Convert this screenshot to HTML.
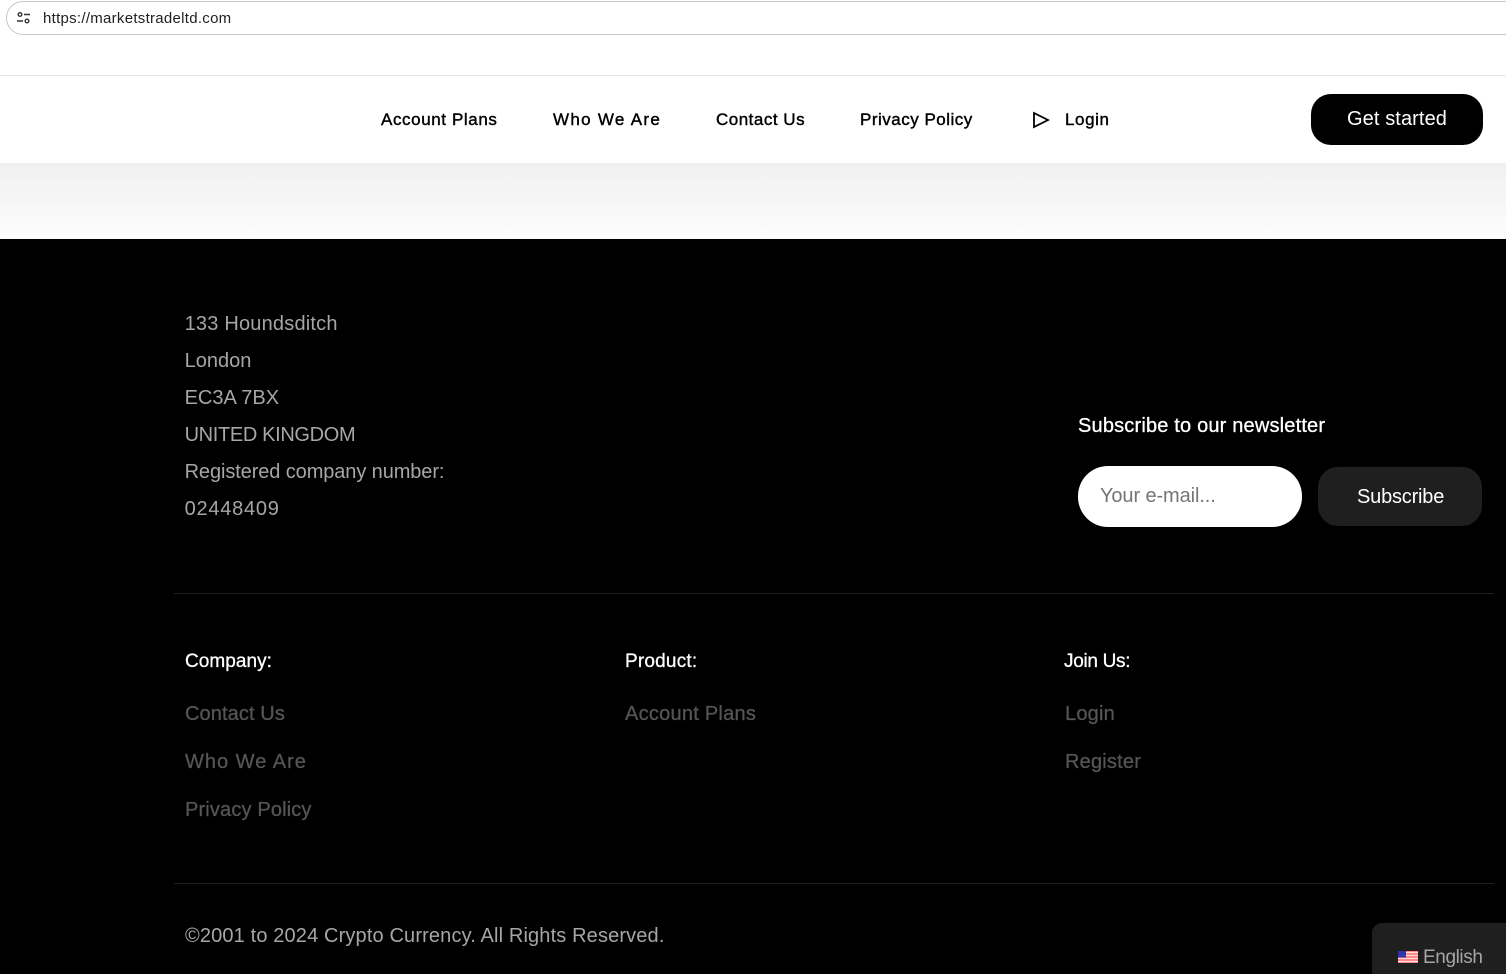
<!DOCTYPE html>
<html><head><meta charset="utf-8"><style>
html,body{margin:0;padding:0;width:1506px;height:974px;overflow:hidden;background:#fff;font-family:"Liberation Sans",sans-serif}
.t{position:absolute;white-space:nowrap;line-height:24px}
.n{color:#000;font-size:17px;font-weight:400;-webkit-text-stroke:.4px #000;top:108px}
.a{color:#a6a6a6;font-size:20px;left:184.6px}
.h{color:#fff;font-size:19px;top:650px;-webkit-text-stroke:.3px #fff}
.l{color:#555;font-size:20px;-webkit-text-stroke:.3px #555}
.b{position:absolute}
</style></head><body>
<div class="b" style="left:6px;top:1px;width:1520px;height:32px;border:1px solid #c4c7c5;border-radius:17px;background:#fff"></div>
<svg class="b" style="left:16px;top:11px" width="15" height="14" viewBox="0 0 15 14" fill="none" stroke="#333" stroke-width="1.4"><circle cx="4" cy="3.5" r="1.8"/><path d="M8 3.5h6M1 10h6"/><circle cx="11" cy="10" r="1.8"/></svg>
<div class="t" style="left:43px;top:7px;font-size:15px;letter-spacing:.28px;color:#1f1f1f">https://marketstradeltd.com</div>
<div class="b" style="left:0;top:75px;width:1506px;height:1px;background:#e6e6e6"></div>
<div class="b" style="left:0;top:163px;width:1506px;height:76px;background:linear-gradient(#f0f0f0,#fdfdfd)"></div>
<div class="t n" style="left:381px;letter-spacing:.6px">Account Plans</div>
<div class="t n" style="left:553px;letter-spacing:1.3px">Who We Are</div>
<div class="t n" style="left:716px;letter-spacing:.5px">Contact Us</div>
<div class="t n" style="left:860px;letter-spacing:.5px">Privacy Policy</div>
<svg class="b" style="left:1032px;top:111px" width="18" height="18" viewBox="0 0 18 18" fill="none" stroke="#000" stroke-width="1.8"><path d="M2 2L16 9L2 16Z"/></svg>
<div class="t n" style="left:1065px;letter-spacing:.6px">Login</div>
<div class="b" style="left:1311px;top:94px;width:172px;height:51px;border-radius:20px;background:#000"></div>
<div class="t" style="left:1347px;top:107px;font-size:20px;letter-spacing:.1px;color:#fff">Get started</div>
<div class="b" style="left:0;top:239px;width:1506px;height:735px;background:#000"></div>
<div class="t a" style="top:312px;letter-spacing:.2px">133 Houndsditch</div>
<div class="t a" style="top:349px">London</div>
<div class="t a" style="top:386px">EC3A 7BX</div>
<div class="t a" style="top:423px;letter-spacing:-.35px">UNITED KINGDOM</div>
<div class="t a" style="top:460px;letter-spacing:-.1px">Registered company number:</div>
<div class="t a" style="top:497px;letter-spacing:.75px">02448409</div>
<div class="t" style="left:1078px;top:414px;font-size:20px;letter-spacing:.18px;color:#fff;-webkit-text-stroke:.3px #fff">Subscribe to our newsletter</div>
<div class="b" style="left:1078px;top:466px;width:224px;height:61px;border-radius:30px;background:#fff"></div>
<div class="t" style="left:1100px;top:484px;font-size:20px;letter-spacing:-.1px;color:#757575">Your e-mail...</div>
<div class="b" style="left:1318px;top:467px;width:164px;height:59px;border-radius:20px;background:#1f1f1f"></div>
<div class="t" style="left:1357px;top:485px;font-size:20px;letter-spacing:-.2px;color:#fff">Subscribe</div>
<div class="b" style="left:174px;top:593px;width:1320px;height:1px;background:#1f1f1f"></div>
<div class="t h" style="left:185px;letter-spacing:.05px">Company:</div>
<div class="t h" style="left:625px;letter-spacing:.2px">Product:</div>
<div class="t h" style="left:1064px;letter-spacing:-.3px">Join Us:</div>
<div class="t l" style="left:185px;top:702px;letter-spacing:.1px">Contact Us</div>
<div class="t l" style="left:185px;top:750px;letter-spacing:1px">Who We Are</div>
<div class="t l" style="left:185px;top:798px;letter-spacing:.15px">Privacy Policy</div>
<div class="t l" style="left:625px;top:702px;letter-spacing:.25px">Account Plans</div>
<div class="t l" style="left:1065px;top:702px;letter-spacing:.2px">Login</div>
<div class="t l" style="left:1065px;top:750px;letter-spacing:.2px">Register</div>
<div class="b" style="left:174px;top:883px;width:1320px;height:1px;background:#1f1f1f"></div>
<div class="t" style="left:185px;top:924px;font-size:20px;letter-spacing:.14px;color:#a6a6a6">©2001 to 2024 Crypto Currency. All Rights Reserved.</div>
<div class="b" style="left:1372px;top:923px;width:134px;height:51px;border-radius:10px 0 0 0;background:#1f1f1f"></div>
<svg class="b" style="left:1398px;top:951px" width="20" height="12" viewBox="0 0 20 12"><rect width="20" height="12" fill="#f88"/><path d="M0 1.5h20M0 4.5h20M0 7.5h20M0 10.5h20" stroke="#fdd" stroke-width="1"/><rect width="8" height="6.5" fill="#33a"/></svg>
<div class="t" style="left:1423px;top:946px;font-size:19px;letter-spacing:-.4px;color:#a6a6a6">English</div>
</body></html>
